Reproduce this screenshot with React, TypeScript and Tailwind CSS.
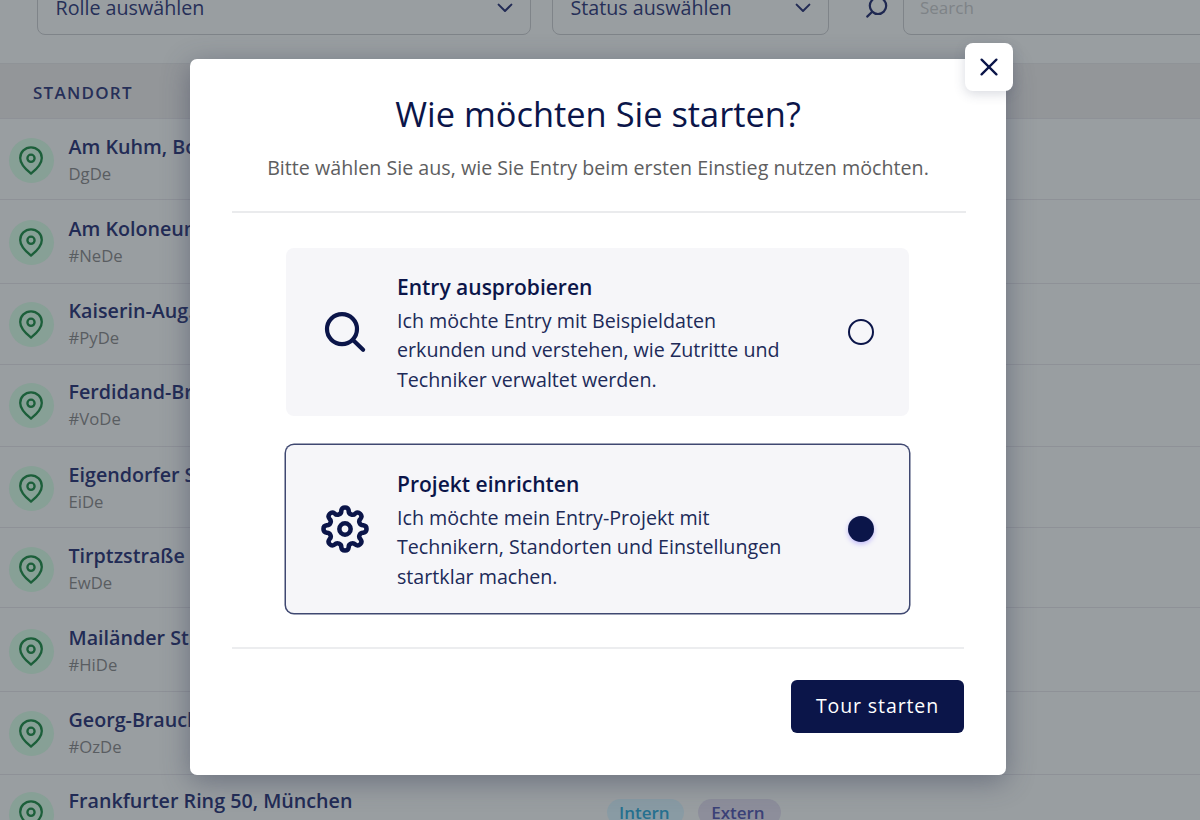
import { useState, type ReactNode } from "react";

interface LocationRow {
  name: string;
  code: string;
  size: string;
  tags?: boolean;
}

// Row heights differ by a few pixels, the padding keeps the content evenly spaced
const locations: LocationRow[] = [
  { name: "Am Kuhm, Bochum", code: "DgDe", size: "h-[81px] pt-[14px]" },
  { name: "Am Koloneum", code: "#NeDe", size: "h-[84px] pt-[15px]" },
  { name: "Kaiserin-Aug.", code: "#PyDe", size: "h-[81px] pt-[13px]" },
  { name: "Ferdidand-Braun", code: "#VoDe", size: "h-[82px] pt-[13px]" },
  { name: "Eigendorfer Str.", code: "EiDe", size: "h-[81px] pt-[14px]" },
  { name: "Tirptzstraße", code: "EwDe", size: "h-[80px] pt-[14px]" },
  { name: "Mailänder Str.", code: "#HiDe", size: "h-[84px] pt-[16px]" },
  { name: "Georg-Brauchle", code: "#OzDe", size: "h-[83px] pt-[14px]" },
  { name: "Frankfurter Ring 50, München", code: "", size: "h-[82px] pt-[12px]", tags: true },
];

// Outline of a gear with eight round teeth, centred on 0,0
function gearPath() {
  const point = (radius: number, deg: number) => {
    const rad = (deg * Math.PI) / 180;
    return [radius * Math.cos(rad), radius * Math.sin(rad)];
  };
  let d = "";
  for (let i = 0; i < 8; i++) {
    const tooth = point(18.1, i * 45);
    const before = point(18.9, i * 45 - 22.5);
    const after = point(18.9, i * 45 + 22.5);
    const start = [(tooth[0] + before[0]) / 2, (tooth[1] + before[1]) / 2];
    const end = [(tooth[0] + after[0]) / 2, (tooth[1] + after[1]) / 2];
    d += i === 0 ? `M${start[0]} ${start[1]}` : `A3.65 3.65 0 0 0 ${start[0]} ${start[1]}`;
    d += `A3.65 3.65 0 0 1 ${end[0]} ${end[1]}`;
    if (i === 7) {
      const first = point(18.1, 0);
      const gap = point(18.9, -22.5);
      d += `A3.65 3.65 0 0 0 ${(first[0] + gap[0]) / 2} ${(first[1] + gap[1]) / 2}Z`;
    }
  }
  return d;
}

function GearIcon() {
  return (
    <svg width="50" height="50" viewBox="-24.3 -24.3 48.6 48.6" fill="none" stroke="#0b1549" strokeWidth="4.4">
      <path d={gearPath()} strokeLinejoin="round" />
      <circle r="5.5" />
    </svg>
  );
}

function MagnifierIcon() {
  return (
    <svg width="50" height="50" viewBox="-25 -25 50 50" fill="none" stroke="#0b1549" strokeWidth="4.2" strokeLinecap="round">
      <circle cx="-3" cy="-2.9" r="15" />
      <path d="M8 8.1l10.1 9.6" />
    </svg>
  );
}

function PinIcon() {
  return (
    <svg width="28" height="32" viewBox="0 0 28 32" fill="none" stroke="#1c5f3a" strokeWidth="2.3" strokeLinejoin="round">
      <path d="M14 28.6C10.6 25.7 3.2 20 3.2 12.9a10.8 10.6 0 0 1 21.6 0C24.8 20 17.4 25.7 14 28.6z" />
      <circle cx="14" cy="13.3" r="3.6" />
    </svg>
  );
}

function Chevron() {
  return (
    <svg width="16" height="10" viewBox="0 0 16 10" fill="none" stroke="#222b55" strokeWidth="2" strokeLinecap="round" strokeLinejoin="round">
      <path d="M1.6 1.6L8 8l6.4-6.4" />
    </svg>
  );
}

function FilterSelect({ label, className }: { label: string; className: string }) {
  return (
    <div className={`flex h-[55px] items-center justify-between rounded-lg border-[1.5px] border-[#7f8489] pl-[17.5px] pr-[17px] ${className}`}>
      <span className="text-[19.7px] text-[#262f58]">{label}</span>
      <Chevron />
    </div>
  );
}

interface OptionCardProps {
  title: string;
  lines: string[];
  icon: ReactNode;
  selected: boolean;
  onSelect: () => void;
}

function OptionCard({ title, lines, icon, selected, onSelect }: OptionCardProps) {
  return (
    <button
      type="button"
      onClick={onSelect}
      className={`flex h-[168px] w-[623px] items-center rounded-[8px] bg-[#f6f6f9] pl-[34px] pr-[35px] text-left ${
        selected ? "shadow-[0_0_0_1.5px_#3f4871]" : ""
      }`}
    >
      {icon}
      <span className="ml-[27px] flex-1 pt-[3px] text-[#0b1549]">
        <span className="mb-[4px] block text-[21px] font-semibold leading-[29px]">{title}</span>
        {lines.map((line) => (
          <span key={line} className="block whitespace-nowrap text-[19.67px] leading-[29.6px] text-[#202a58]">
            {line}
          </span>
        ))}
      </span>
      {selected ? (
        <span className="size-[26px] rounded-full bg-[#0b1549] shadow-[0_2px_5px_rgba(90,70,255,0.35)]" />
      ) : (
        <span className="size-[26px] rounded-full border-2 border-[#0b1549]" />
      )}
    </button>
  );
}

export default function App() {
  const [choice, setChoice] = useState("setup");

  return (
    <div className="relative h-[820px] w-[1200px] overflow-hidden bg-[#999ea1] font-['Open_Sans',sans-serif]">
      {/* Filter bar */}
      <div className="-mt-[20px] flex h-[83px] w-[1300px] items-start pl-[37px]">
        <FilterSelect label="Rolle auswählen" className="w-[494px]" />
        <FilterSelect label="Status auswählen" className="ml-[21px] w-[277px]" />
        <svg className="ml-[35px] mt-[14px]" width="26" height="26" viewBox="0 0 26 26" fill="none" stroke="#1f2851" strokeWidth="2.2" strokeLinecap="round">
          <circle cx="14" cy="11.8" r="8.2" />
          <path d="M8.2 17.8l-5 4.8" />
        </svg>
        <div className="ml-[13px] flex h-[55px] flex-1 items-center rounded-lg border-[1.5px] border-[#7f8489] pl-[16px] pt-px text-[17px] text-[#7e8387]">
          Search
        </div>
      </div>

      {/* Table */}
      <div className="flex h-[55px] items-center border-t border-[#8f9397] bg-[#939699] pl-[33px] pt-[4px] text-[17px] font-semibold tracking-[1.25px] text-[#262f58]">
        STANDORT
      </div>
      {locations.map((row) => (
        <div key={row.name} className={`flex items-start border-t border-[#8e9197] pl-[8.5px] ${row.size}`}>
          <div className="mt-[5px] flex size-[45px] shrink-0 items-center justify-center rounded-full bg-[#87a096]">
            <PinIcon />
          </div>
          <div className="ml-[15px] w-[538px] whitespace-nowrap">
            <div className="mb-px pt-px text-[19.7px] font-semibold leading-[25px] text-[#222b55]">{row.name}</div>
            <div className="text-[16.7px] leading-[28px] text-[#595d61]">{row.code}</div>
          </div>
          {row.tags && (
            <div className="mt-[12px] flex gap-[14px] text-[17px] font-semibold leading-[27px]">
              <span className="rounded-full bg-[#899ba4] pl-[12.5px] pr-[14.5px] text-[#26708f]">Intern</span>
              <span className="rounded-full bg-[#8d8e9b] pl-[13px] pr-[16px] text-[#3b4177]">Extern</span>
            </div>
          )}
        </div>
      ))}

      {/* Dialog */}
      <div className="absolute inset-0 pl-[190px] pt-[59px]">
        <div className="relative flex h-[716px] w-[816px] flex-col rounded-[7px] bg-white px-[42px] shadow-[0_6px_28px_rgba(50,58,85,0.45)]">
          <h1 className="pt-[30px] text-center text-[34.4px] leading-[50px] text-[#0b1549]">Wie möchten Sie starten?</h1>
          <p className="mt-[15px] text-center text-[19.68px] leading-[28px] text-[#5e5e60]">
            Bitte wählen Sie aus, wie Sie Entry beim ersten Einstieg nutzen möchten.
          </p>
          <div className="mt-[29px] h-[2px] w-[734px] shrink-0 bg-[#eaebed]" />
          <div className="mt-[35px] flex flex-col gap-[29px] pl-[54px]">
            <OptionCard
              title="Entry ausprobieren"
              lines={["Ich möchte Entry mit Beispieldaten", "erkunden und verstehen, wie Zutritte und", "Techniker verwaltet werden."]}
              icon={<MagnifierIcon />}
              selected={choice === "try"}
              onSelect={() => setChoice("try")}
            />
            <OptionCard
              title="Projekt einrichten"
              lines={["Ich möchte mein Entry-Projekt mit", "Technikern, Standorten und Einstellungen", "startklar machen."]}
              icon={<GearIcon />}
              selected={choice === "setup"}
              onSelect={() => setChoice("setup")}
            />
          </div>
          <div className="mt-[34px] h-[2px] w-[732px] shrink-0 bg-[#ecedef]" />
          <button type="button" className="mt-[31px] h-[53px] w-[173px] self-end rounded-[6px] bg-[#0b1549] pb-px text-[19.5px] tracking-[0.9px] text-white">
            Tour starten
          </button>

          <button
            type="button"
            aria-label="Schließen"
            className="absolute -right-[7px] -top-[16.5px] flex size-[48px] items-center justify-center rounded-[8px] bg-white shadow-[0_3px_12px_rgba(60,70,100,0.2)]"
          >
            <svg width="18" height="18" viewBox="0 0 18 18" fill="none" stroke="#0b1549" strokeWidth="2.3" strokeLinecap="round">
              <path d="M1.6 1.6l14.8 14.8M16.4 1.6L1.6 16.4" />
            </svg>
          </button>
        </div>
      </div>
    </div>
  );
}
